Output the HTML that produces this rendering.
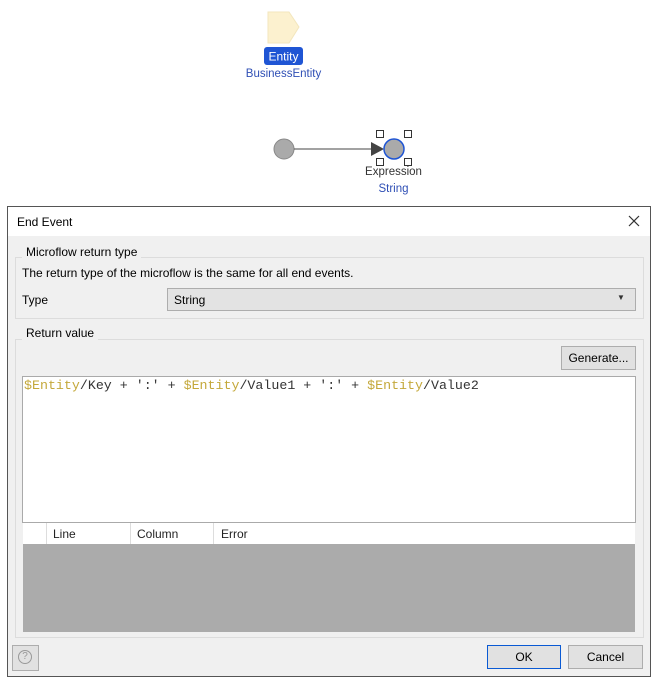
<!DOCTYPE html>
<html><head><style>
body{margin:0;width:655px;height:682px;background:#fff;position:relative;font-family:"Liberation Sans",sans-serif;font-size:12px;color:#000;overflow:hidden}
.a{position:absolute}
.mono{font-family:"Liberation Mono",monospace;font-size:13.3px}
</style></head><body>
<svg class="a" style="left:0;top:0" width="655" height="206">
<path d="M268 12H289L299 27L289 43H268Z" fill="#fcf1cf" stroke="#f3e6bd"/>
<rect x="264" y="47" width="39" height="18" rx="3" fill="#1f55d4"/>
<text x="283.5" y="60.5" fill="#fff" font-size="12" text-anchor="middle" font-family="Liberation Sans">Entity</text>
<text x="283.5" y="77" fill="#2f4fb5" font-size="11.5" text-anchor="middle" font-family="Liberation Sans">BusinessEntity</text>
<circle cx="284" cy="149" r="10" fill="#aaa" stroke="#888" stroke-width="1"/>
<line x1="294" y1="149" x2="374" y2="149" stroke="#444"/>
<path d="M371 142L384 149L371 156Z" fill="#444"/>
<circle cx="394" cy="149" r="10" fill="#aaa" stroke="#1f55d4" stroke-width="1.5"/>
<g fill="#fff" stroke="#333"><rect x="376.5" y="130.5" width="7" height="7"/><rect x="404.5" y="130.5" width="7" height="7"/><rect x="376.5" y="158.5" width="7" height="7"/><rect x="404.5" y="158.5" width="7" height="7"/></g>
<text x="393.5" y="175" fill="#333" font-size="11.5" text-anchor="middle" font-family="Liberation Sans">Expression</text>
<text x="393.5" y="192" fill="#2f4fb5" font-size="11.5" text-anchor="middle" font-family="Liberation Sans">String</text>
</svg>
<div class="a" style="left:7px;top:206px;width:642px;height:469px;border:1px solid #555;background:#f0f0f0"></div>
<div class="a" style="left:8px;top:207px;width:642px;height:29px;background:#fff"></div>
<div class="a" style="left:17px;top:215px">End Event</div>
<svg class="a" style="left:628px;top:215px" width="12" height="12"><path d="M1 1L11 11M11 1L1 11" stroke="#333" stroke-width="1.2"/></svg>
<div class="a" style="left:15px;top:257px;width:627px;height:60px;border:1px solid #dcdcdc"></div>
<div class="a" style="left:22px;top:245px;background:#f0f0f0;padding:0 4px">Microflow return type</div>
<div class="a" style="left:22px;top:266px">The return type of the microflow is the same for all end events.</div>
<div class="a" style="left:22px;top:293px">Type</div>
<div class="a" style="left:167px;top:288px;width:467px;height:21px;background:#e3e3e3;border:1px solid #adadad"></div>
<div class="a" style="left:174px;top:293px">String</div>
<div class="a" style="left:617px;top:293px;font-size:8px;color:#333">▼</div>
<div class="a" style="left:15px;top:339px;width:627px;height:297px;border:1px solid #dcdcdc"></div>
<div class="a" style="left:22px;top:326px;background:#f0f0f0;padding:0 4px">Return value</div>
<div class="a" style="left:561px;top:346px;width:73px;height:22px;background:#e1e1e1;border:1px solid #adadad;text-align:center;line-height:22px">Generate...</div>
<div class="a" style="left:22px;top:376px;width:612px;height:145px;background:#fff;border:1px solid #aaa"></div>
<div class="a mono" style="left:24px;top:378px;color:#333"><span style="color:#c4a83a">$Entity</span>/Key + ':' + <span style="color:#c4a83a">$Entity</span>/Value1 + ':' + <span style="color:#c4a83a">$Entity</span>/Value2</div>
<div class="a" style="left:23px;top:523px;width:612px;height:21px;background:#fff"></div>
<div class="a" style="left:46px;top:523px;width:1px;height:21px;background:#ddd"></div>
<div class="a" style="left:130px;top:523px;width:1px;height:21px;background:#ddd"></div>
<div class="a" style="left:213px;top:523px;width:1px;height:21px;background:#ddd"></div>
<div class="a" style="left:53px;top:527px;color:#222">Line</div>
<div class="a" style="left:137px;top:527px;color:#222">Column</div>
<div class="a" style="left:221px;top:527px;color:#222">Error</div>
<div class="a" style="left:23px;top:544px;width:612px;height:88px;background:#ababab"></div>
<div class="a" style="left:12px;top:645px;width:25px;height:24px;background:#e1e1e1;border:1px solid #adadad"></div>
<div class="a" style="left:18px;top:650px;width:12px;height:12px;border:1px solid #999;border-radius:50%;font-size:10px;color:#999;text-align:center;line-height:12px">?</div>
<div class="a" style="left:487px;top:645px;width:72px;height:22px;background:#e1e1e1;border:1px solid #0a5ad4;text-align:center;line-height:22px">OK</div>
<div class="a" style="left:568px;top:645px;width:73px;height:22px;background:#e1e1e1;border:1px solid #adadad;text-align:center;line-height:22px">Cancel</div>
</body></html>
